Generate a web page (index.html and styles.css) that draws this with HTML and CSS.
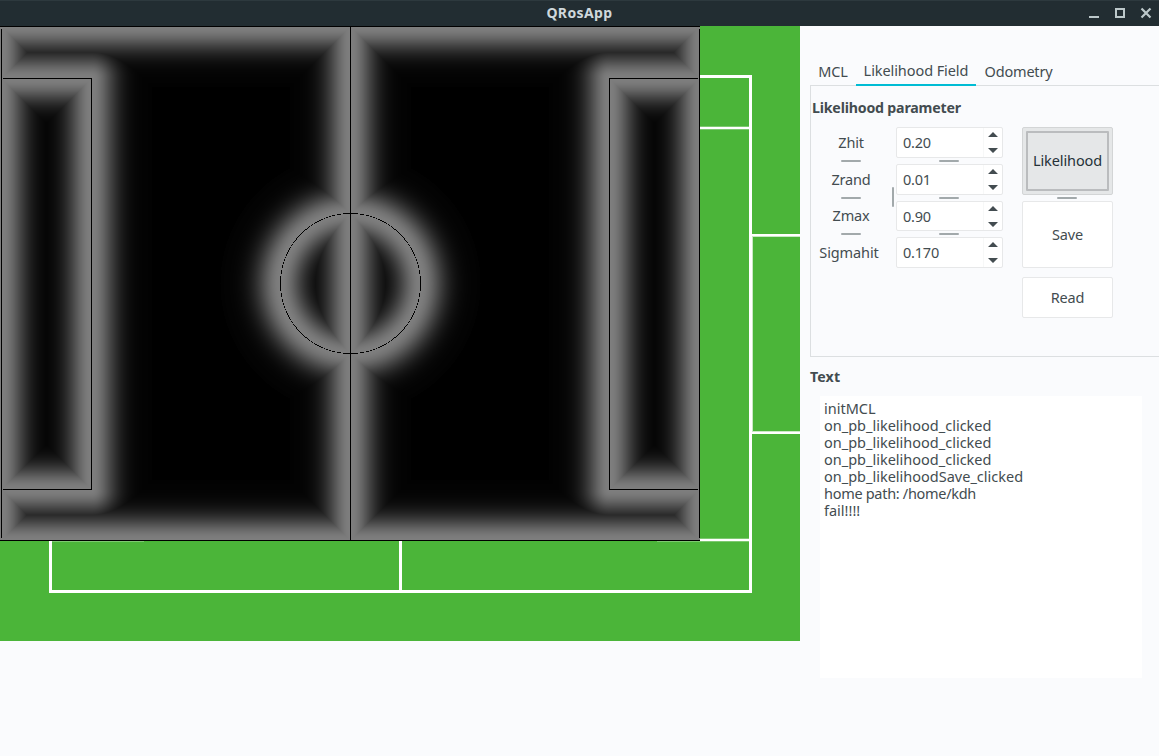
FILE: index.html
```html
<!DOCTYPE html>
<html lang="en">
<head>
<meta charset="utf-8">
<title>QRosApp</title>
<link rel="stylesheet" href="styles.css">
</head>
<body>
<header class="titlebar">
  <span class="title">QRosApp</span>
  <svg class="controls" width="66" height="26" viewBox="0 0 66 26" fill="none" stroke="#bcc8ca">
    <path d="M2 17h10" stroke-width="2"/>
    <rect x="29" y="9" width="8" height="8" stroke-width="2"/>
    <path d="M54.500 8.500l9 9M63.500 8.500l-9 9" stroke-width="2.200"/>
  </svg>
</header>
<main class="content">
  <section class="field">
    <svg class="pitch" width="800" height="615" viewBox="0 26 800 615" shape-rendering="crispEdges">
      <rect y="26" width="800" height="615" fill="#4bb539"/>
      <g fill="#fff">
        <path d="M49 75h703v518H49zM52 78v512h697V78z" fill-rule="evenodd"/>
        <rect x="399" y="78" width="3" height="512"/>
        <rect x="657" y="127" width="92" height="2"/>
        <rect x="657" y="539" width="92" height="2"/>
        <rect x="52" y="539" width="92" height="2"/>
        <rect x="752" y="234" width="48" height="2"/>
        <rect x="752" y="432" width="48" height="2"/>
      </g>
      <g fill="#fff" fill-opacity=".28">
        <rect x="657" y="126" width="92" height="1"/>
        <rect x="657" y="129" width="92" height="1"/>
        <rect x="657" y="538" width="92" height="1"/>
        <rect x="657" y="541" width="92" height="1"/>
        <rect x="52" y="541" width="92" height="1"/>
      </g>
      <g fill="#fff" fill-opacity=".7">
        <rect x="752" y="236" width="48" height="1"/>
        <rect x="752" y="431" width="48" height="1"/>
        <rect x="752" y="237" width="1" height="194"/>
      </g>
    </svg>
    <canvas class="likelihood" id="likelihood" width="700" height="515"></canvas>
  </section>
  <aside class="panel">
    <nav class="tabs">
      <span class="tab tab-mcl">MCL</span>
      <span class="tab tab-active">Likelihood Field</span>
      <span class="tab tab-odom">Odometry</span>
    </nav>
    <section class="page">
      <h2 class="heading">Likelihood parameter</h2>
      <div class="params">
        <div class="labels">
          <div class="row">Zhit</div><i class="grip"></i>
          <div class="row">Zrand</div><i class="grip"></i>
          <div class="row short">Zmax</div><i class="grip"></i>
          <div class="row"><span class="wide">Sigmahit</span></div>
        </div>
        <i class="grip-v"></i>
        <div class="spins">
          <div class="row spin"><span>0.20</span><svg class="arrows" width="10" height="22"><path d="M0 6L5 1L10 6zM0 17L5 22L10 17z"/></svg></div><i class="grip"></i>
          <div class="row spin"><span>0.01</span><svg class="arrows" width="10" height="22"><path d="M0 6L5 1L10 6zM0 17L5 22L10 17z"/></svg></div><i class="grip"></i>
          <div class="row spin short"><span>0.90</span><svg class="arrows" width="10" height="22"><path d="M0 6L5 1L10 6zM0 17L5 22L10 17z"/></svg></div><i class="grip"></i>
          <div class="row spin"><span>0.170</span><svg class="arrows" width="10" height="22"><path d="M0 6L5 1L10 6zM0 17L5 22L10 17z"/></svg></div>
        </div>
        <div class="buttons">
          <button class="btn btn-pressed"><span class="focus">Likelihood</span></button>
          <i class="grip"></i>
          <button class="btn btn-save">Save</button>
          <button class="btn btn-read">Read</button>
        </div>
      </div>
    </section>
    <h2 class="heading heading-log">Text</h2>
    <pre class="log">initMCL
on_pb_likelihood_clicked
on_pb_likelihood_clicked
on_pb_likelihood_clicked
on_pb_likelihoodSave_clicked
<span class="tight">home path: /home/kdh</span>
fail!!!!</pre>
  </aside>
</main>
<script src="field.js"></script>
</body>
</html>
```
FILE: styles.css
```css
* { box-sizing: border-box; }
body {
  margin: 0;
  width: 1159px;
  height: 756px;
  overflow: hidden;
  background: #fafbfd;
  color: #434c50;
  font: 14.5px/18px "Noto Sans", "Open Sans", sans-serif;
  letter-spacing: -0.2px;
}
.titlebar {
  display: grid;
  grid-template-columns: 66px 1fr 66px;
  align-items: center;
  height: 26px;
  padding-right: 6px;
  background: #222d32;
  border-top: 1px solid #2d393e;
}
.title {
  grid-column: 2;
  padding: 0 0 2px 6px;
  text-align: center;
  color: #cfd8dc;
  font-size: 14px;
  font-weight: 700;
  letter-spacing: 0.4px;
}
.controls { margin-top: -1px; }
.content { display: grid; grid-template-columns: 800px 1fr; height: 730px; }
.field { position: relative; height: 615px; }
.pitch { display: block; }
.likelihood { position: absolute; left: 0; top: 0; }
.panel { padding: 32px 0 0 10px; }
.tabs { position: relative; display: flex; height: 28px; }
.tab { padding-top: 4px; text-align: center; white-space: nowrap; }
.tab-mcl { width: 46px; }
.tab-active {
  width: 120px;
  padding-top: 3px;
  border-bottom: 2px solid #00bcd4;
  letter-spacing: -0.08px;
}
.tab-odom { width: 85px; }
.page {
  height: 272px;
  margin-top: -1px;
  border: 1px solid #dcdfe1;
  border-right: 0;
}
.heading { margin: 0; font-size: 14.2px; line-height: 18px; font-weight: 700; letter-spacing: -0.2px; }
.page .heading { padding: 13px 0 0 1px; }
.params { display: flex; margin-top: 10px; }
.labels { width: 80px; text-align: center; }
.row { height: 31px; line-height: 30px; }
.row.short { height: 30px; line-height: 28px; }
.wide { margin-left: -4px; letter-spacing: -0.1px; }
.grip {
  display: block;
  width: 20px;
  height: 2px;
  margin: 2px auto;
  border-radius: 1px;
  background: #a2a9ab;
}
.grip-v { width: 2px; height: 20px; margin: 60px 2px 0 1px; border-radius: 1px; background: #a2a9ab; }
.spins { width: 107px; }
.spins .grip { margin-left: 43px; }
.spin {
  display: flex;
  justify-content: space-between;
  align-items: center;
  padding: 0 4px 2px 6px;
  border: 1px solid #e7e8e9;
  border-radius: 2px;
  background: linear-gradient(#f7f8f8, #f7f8f8) 86px 0 / 1px 100% no-repeat #fff;
}
.spin.short { padding-bottom: 0; }
.arrows { fill: #434c50; }
.buttons { display: flex; flex-direction: column; width: 91px; margin-left: 19px; }
.buttons .grip { margin-left: 35px; }
.btn {
  width: 91px;
  padding: 0 0 2px;
  border: 1px solid #e7e8e9;
  border-radius: 2px;
  background: #fff;
  color: #434c50;
  font: inherit;
  letter-spacing: inherit;
}
.btn-pressed { height: 68px; padding: 3px; background: #e5e7e8; border-color: #d3d5d6; color: #263238; letter-spacing: -0.1px; }
.focus {
  display: flex;
  height: 60px;
  padding-bottom: 2px;
  align-items: center;
  justify-content: center;
  border: 2px solid #babcbe;
  border-radius: 1px;
}
.btn-save { height: 67px; }
.btn-read { height: 41px; margin-top: 9px; }
.heading-log { margin-top: 11px; letter-spacing: 0.1px; }
.log {
  width: 322px;
  height: 282px;
  margin: 10px 0 0 10px;
  padding: 4px;
  background: #fff;
  font: 14.5px/17px "Noto Sans", "Open Sans", sans-serif;
  letter-spacing: 0;
}
.tight { letter-spacing: -0.3px; }
```
FILE: field.js
```js
// Likelihood of every cell: a Gaussian of the distance to the closest field line.
const W = 700, H = 515, SIGMA = 17, REACH = 60;
const canvas = document.getElementById("likelihood");
const ctx = canvas.getContext("2d");
const image = ctx.createImageData(W, H);
const CX = 350, CY = 257, R = 70;

// x1, y1, x2, y2 of the axis-aligned lines
const lines = [
  [0, 0, 699, 0], [0, 514, 699, 514],
  [1, 3, 1, 511], [699, 3, 699, 511],
  [350, 0, 350, 514],
  [3, 52, 91, 52], [3, 463, 91, 463], [91, 52, 91, 463],
  [609, 52, 697, 52], [609, 463, 697, 463], [609, 52, 609, 463]
];

for (let y = 0; y < H; y++) {
  for (let x = 0; x < W; x++) {
    const ring = Math.abs(Math.hypot(x - CX, y - CY) - R);
    let d = ring;
    for (const [x1, y1, x2, y2] of lines) {
      const dx = Math.max(x1 - x, 0, x - x2);
      const dy = Math.max(y1 - y, 0, y - y2);
      d = Math.min(d, Math.hypot(dx, dy));
    }
    let v = d > REACH ? 0 : 2 + 124 * Math.exp(-d * d / (2 * SIGMA * SIGMA));
    if (d === 0 || ring < 0.355) v = 0;
    const i = (y * W + x) * 4;
    image.data[i] = image.data[i + 1] = image.data[i + 2] = v;
    image.data[i + 3] = 255;
  }
}
ctx.putImageData(image, 0, 0);
```
